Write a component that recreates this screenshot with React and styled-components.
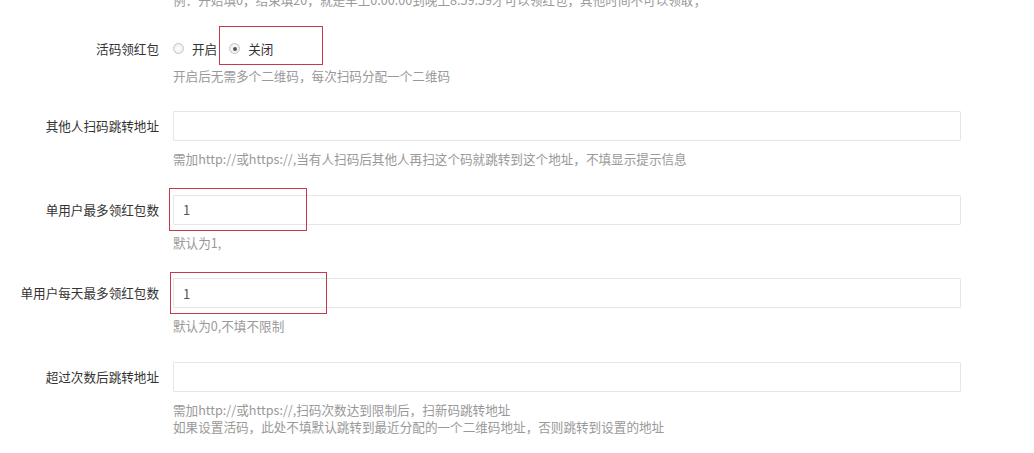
import styled, { createGlobalStyle } from "styled-components";

const GlobalStyle = createGlobalStyle`
    body {
        margin: 0;
        background: #fff;
        font-family: "Noto Sans CJK SC", "Microsoft YaHei", sans-serif;
        font-size: 12.6px;
        color: #333;
    }
`;

const Form = styled.div`
    margin-top: -9px;
    display: flex;
    flex-direction: column;
    gap: 27px;
`;

const Group = styled.div`
    display: grid;
    grid-template-columns: 159px 788px;
    column-gap: 14px;
    align-items: start;
`;

const Label = styled.label`
    text-align: right;
    line-height: ${(p) => p.$h || 30}px;
    white-space: nowrap;
    color: #333;
`;

const Control = styled.div`
    position: relative;
    grid-column: 2;
`;

const Input = styled.input`
    display: block;
    box-sizing: border-box;
    width: 100%;
    height: 30px;
    border: 1px solid #e5e6e7;
    border-radius: 1px;
    padding: 0 9px;
    font-family: "Noto Sans CJK SC", sans-serif;
    font-size: 13px;
    color: #555;
    background: #fff;
    outline: none;
`;

const Help = styled.div`
    margin-top: ${(p) => p.$mt ?? 9}px;
    line-height: 17.5px;
    color: #999;
    white-space: nowrap;
`;

const RadioRow = styled.div`
    display: flex;
    align-items: center;
    height: 20px;
`;

const RadioItem = styled.span`
    display: inline-flex;
    align-items: center;
    margin-right: 12px;
    color: #333;
`;

const Dot = styled.span`
    width: 9px;
    height: 9px;
    border-radius: 50%;
    border: 1px solid #c4c4c4;
    background: radial-gradient(circle, #fff 0%, #e8e8e8 100%);
    margin: 0 8px 0 0;
    position: relative;

    &::after {
        content: "";
        display: ${(p) => (p.$checked ? "block" : "none")};
        position: absolute;
        left: 2.5px;
        top: 2.5px;
        width: 4px;
        height: 4px;
        border-radius: 50%;
        background: #555;
    }
`;

const Mark = styled.div`
    position: absolute;
    border: 1px solid #c8384a;
    pointer-events: none;
`;

function App() {
    return (<>
        <GlobalStyle />
        <Form>

            <Group>
                <Control>
                    <Help $mt={0}>例：开始填0，结束填20，就是早上0:00:00到晚上8:59:59才可以领红包，其他时间不可以领取；</Help>
                </Control>
            </Group>

            <Group style={{ marginTop: 3 }}>
                <Label $h={20}>活码领红包</Label>
                <Control>
                    <RadioRow>
                        <RadioItem><Dot />开启</RadioItem>
                        <RadioItem><Dot $checked />关闭</RadioItem>
                    </RadioRow>
                    <Help $mt={8}>开启后无需多个二维码，每次扫码分配一个二维码</Help>
                    <Mark style={{ left: 46, top: -13, width: 102, height: 37 }} />
                </Control>
            </Group>

            <Group>
                <Label>其他人扫码跳转地址</Label>
                <Control>
                    <Input />
                    <Help>需加http://或https://,当有人扫码后其他人再扫这个码就跳转到这个地址，不填显示提示信息</Help>
                </Control>
            </Group>

            <Group>
                <Label>单用户最多领红包数</Label>
                <Control>
                    <Input defaultValue="1" />
                    <Help>默认为1,</Help>
                    <Mark style={{ left: -4, top: -7, width: 136, height: 41 }} />
                </Control>
            </Group>

            <Group>
                <Label>单用户每天最多领红包数</Label>
                <Control>
                    <Input defaultValue="1" />
                    <Help>默认为0,不填不限制</Help>
                    <Mark style={{ left: -3, top: -6, width: 155, height: 40 }} />
                </Control>
            </Group>

            <Group>
                <Label>超过次数后跳转地址</Label>
                <Control>
                    <Input />
                    <Help>需加http://或https://,扫码次数达到限制后，扫新码跳转地址<br />如果设置活码，此处不填默认跳转到最近分配的一个二维码地址，否则跳转到设置的地址</Help>
                </Control>
            </Group>

        </Form>
    </>);
}

export default App;
